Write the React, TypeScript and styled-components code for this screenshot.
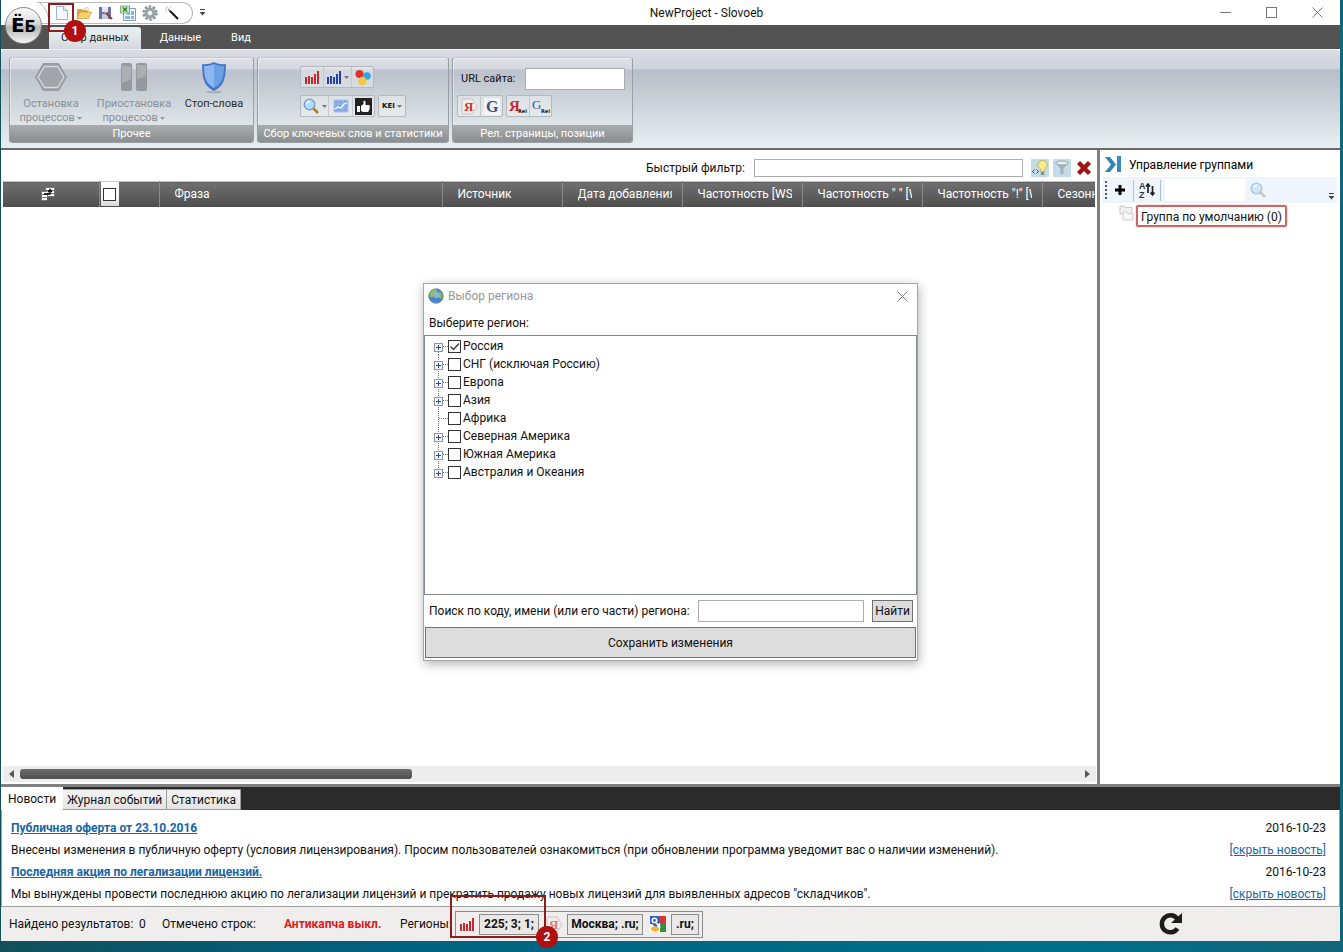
import React from 'react';
import styled, { createGlobalStyle, css } from 'styled-components';

const Global = createGlobalStyle`
  * { box-sizing: border-box; }
  body { margin: 0; font: 12px/16px Roboto, "Noto Sans", sans-serif; color: #111; }
  button, input { font: inherit; color: inherit; margin: 0; border-radius: 0; }
  button { padding: 0; }
  svg { display: block; flex: none; }
`;

const Desktop = styled.div`
  min-height: 100vh;
  display: flex;
  flex-direction: column;
  padding: 0 3px 11px 1px;
  background: linear-gradient(90deg, #12505c, #006280 30%, #00708a 80%, #12657a);
`;
const AppWindow = styled.div`
  position: relative;
  flex: 1;
  display: flex;
  flex-direction: column;
  background: #fff;
`;

/* Title bar */
const TitleBar = styled.header`
  position: relative;
  height: 25px;
  display: flex;
  align-items: center;
  padding-left: 36px;
`;
const Orb = styled.button`
  position: absolute;
  z-index: 2;
  left: 4px;
  top: 7px;
  width: 37px;
  height: 37px;
  border: 1px solid #8a8a8a;
  border-radius: 50%;
  background: linear-gradient(#fdfdfd, #d9d9d9 45%, #b5b5b5 55%, #f4f4f4);
  font: bold 20px/34px "DejaVu Sans", sans-serif;
  color: #000;
  white-space: nowrap;
  small { font-size: 15px; }
`;
const QuickBar = styled.nav`
  display: flex;
  align-items: center;
  height: 22px;
  padding: 0 9px 0 3px;
  border: 1px solid #b9b9b9;
  border-left: 0;
  border-radius: 0 11px 11px 0;
`;
const QuickButton = styled.button`
  position: relative;
  width: 22px;
  height: 20px;
  display: grid;
  place-items: center;
  border: 0;
  background: none;
`;
const More = styled.button`
  width: 18px;
  height: 20px;
  display: grid;
  place-items: center;
  border: 0;
  background: none;
`;
const Title = styled.h1`
  flex: 1;
  margin: 0;
  font-size: 12px;
  font-weight: 400;
  text-align: center;
`;
const Caption = styled.button`
  width: 46px;
  height: 24px;
  display: grid;
  place-items: center;
  border: 0;
  background: none;
`;

/* Numbered callouts */
const Callout = styled.span<{ $box: string }>`
  position: absolute;
  z-index: 3;
  inset: ${p => p.$box};
  border: 2px solid #8e1c1c;
  pointer-events: none;
`;
const CalloutNumber = styled.b`
  position: absolute;
  right: -14px;
  bottom: -12px;
  width: 22px;
  height: 22px;
  border-radius: 50%;
  background: #b01010;
  color: #fff;
  font-size: 12px;
  line-height: 22px;
  text-align: center;
`;

/* Ribbon */
const TabStrip = styled.nav`
  height: 24px;
  display: flex;
  align-items: flex-end;
  padding-left: 48px;
  background: #535353;
  font-size: 11px;
`;
const RibbonTab = styled.button<{ $active?: boolean }>`
  height: 22px;
  padding: 0 ${p => (p.$active ? 12 : 15)}px;
  margin-right: ${p => (p.$active ? 4 : 0)}px;
  border: 0;
  border-radius: 3px 3px 0 0;
  background: ${p => (p.$active ? 'linear-gradient(#dff0f3, #e4e8ea 40%, #d5d9df)' : 'none')};
  color: ${p => (p.$active ? '#222' : '#fff')};
`;
const Ribbon = styled.section`
  height: 101px;
  display: flex;
  gap: 3px;
  padding: 8px 8px 5px;
  border-bottom: 2px solid #6a6a6a;
  border-radius: 4px 4px 0 0;
  background: linear-gradient(#d9dce3, #ced2db 20%, #b8beca 21%, #c5ccd3 45%, #dfe6ea 85%, #e8eff1);
  box-shadow: inset 0 1px 0 #eef0f3;
  font-size: 11px;
`;
const Group = styled.section<{ $w: number }>`
  width: ${p => p.$w}px;
  height: 86px;
  display: flex;
  flex-direction: column;
  border: 1px solid #9a9fa3;
  border-top-color: #c3c8cc;
  border-radius: 3px;
  overflow: hidden;
  background: linear-gradient(rgba(255,255,255,.25), rgba(255,255,255,.05) 20%, rgba(255,255,255,.15));
  box-shadow: inset 1px 1px 0 rgba(255,255,255,.4);
`;
const GroupBody = styled.div`flex: 1; display: flex;`;
const ToolRows = styled.div<{ $left: number; $top: number; $gap: number }>`
  display: flex;
  flex-direction: column;
  gap: ${p => p.$gap}px;
  padding: ${p => p.$top}px 0 0 ${p => p.$left}px;
`;
const ToolRow = styled.div`display: flex; gap: 3px; height: 22px; align-items: center;`;
const GroupTitle = styled.h2`
  margin: 0;
  height: 17px;
  font-size: 11px;
  font-weight: 400;
  line-height: 17px;
  text-align: center;
  white-space: nowrap;
  color: #fff;
  background: linear-gradient(#a9adad, #8b8e8e);
`;
const BigButton = styled.button<{ $w: number }>`
  width: ${p => p.$w}px;
  display: flex;
  flex-direction: column;
  align-items: center;
  gap: 3px;
  padding-top: 4px;
  border: 0;
  background: none;
  line-height: 14px;
  color: #2b2b2b;
  &:disabled { color: #8b9095; }
`;
const ToolSet = styled.div`
  display: flex;
  height: 22px;
  border: 1px solid #b3b9bd;
  border-radius: 2px;
  background: rgba(255,255,255,.35);
`;
const Tool = styled.button<{ $w?: number }>`
  width: ${p => p.$w ?? 22}px;
  display: flex;
  align-items: center;
  justify-content: center;
  gap: 2px;
  border: 0;
  background: none;
  & + & { border-left: 1px solid #c3c9cd; }
`;
const KeiText = styled.span`font: bold 7px/10px "DejaVu Sans", sans-serif;`;
const UrlLabel = styled.label`display: flex; align-items: center; gap: 9px; padding-left: 4px; white-space: nowrap;`;
const TextBox = styled.input<{ $w?: number; $h: number }>`
  ${p => (p.$w ? css`width: ${p.$w}px;` : css`flex: 1; min-width: 0;`)}
  height: ${p => p.$h}px;
  padding: 0 4px;
  border: 1px solid #abadb3;
  background: #fff;
`;

/* Work area */
const Work = styled.main`flex: 1; display: flex; border-bottom: 3px solid #808080;`;
const DataPane = styled.section`
  flex: 1;
  min-width: 0;
  display: flex;
  flex-direction: column;
  padding-left: 2px;
`;
const FilterBar = styled.div`
  height: 31px;
  display: flex;
  align-items: center;
  justify-content: flex-end;
  gap: 4px;
  padding: 4px 4px 0 0;
`;
const FilterLabel = styled.label`display: flex; align-items: center; gap: 9px; margin-right: 4px;`;
const FilterButton = styled.button<{ $plain?: boolean }>`
  width: 18px;
  height: 18px;
  display: grid;
  place-items: center;
  border: 0;
  background: ${p => (p.$plain ? 'none' : '#c2dcea')};
`;
const TableWrap = styled.div`flex: 1; overflow: hidden; margin-right: 2px;`;
const Table = styled.table`
  width: 1160px;
  table-layout: fixed;
  border-collapse: collapse;
`;
const HeadCell = styled.th<{ $w: number }>`
  width: ${p => p.$w}px;
  height: 25px;
  padding: 0 10px 0 15px;
  border-right: 1px solid #8a8a8a;
  border-top: 1px solid #c8c8c8;
  background: linear-gradient(#707070, #4d4d4d);
  color: #fff;
  font-weight: 400;
  text-align: left;
  white-space: nowrap;
  overflow: hidden;
`;
const HeadClip = styled.div`overflow: hidden;`;
const IconCell = styled(HeadCell)`padding: 0 0 0 38px;`;
const CheckCell = styled(HeadCell)`padding: 0;`;
const CheckHolder = styled.label`
  width: 18px;
  height: 24px;
  display: grid;
  place-items: center;
  margin-left: 1px;
  background: linear-gradient(#fff, #f4f2ee 70%, #d9d5cc);
`;
const Check = styled.input`
  appearance: none;
  width: 13px;
  height: 13px;
  border: 1px solid #333;
  background: #fff;
`;
const ScrollBar = styled.div`
  height: 16px;
  display: flex;
  align-items: center;
  gap: 6px;
  padding: 0 6px;
  margin: 0 1px 2px 0;
  background: #ededed;
`;
const ScrollTrack = styled.div`flex: 1;`;
const ScrollThumb = styled.div`
  width: 37%;
  height: 10px;
  border-radius: 3px;
  background: linear-gradient(#6d6d6d, #4e4e4e);
`;
const SidePane = styled.aside`width: 243px; border-left: 3px solid #808080; padding: 0 3px 0 2px;`;
const SideHead = styled.div`
  height: 27px;
  display: flex;
  align-items: center;
  gap: 7px;
  padding: 2px 0 0 3px;
`;
const SideTitle = styled.h2`margin: 0; font-size: 12px; font-weight: 400; color: #000;`;
const SideTools = styled.div`
  height: 26px;
  display: flex;
  align-items: center;
  gap: 4px;
  padding-left: 3px;
  background: #eff5fc;
`;
const Dots = styled.span`width: 2px; height: 18px; border-left: 2px dotted #555;`;
const Bar = styled.span`width: 1px; height: 21px; background: #b7c0cc;`;
const SideButton = styled.button<{ $w: number }>`
  width: ${p => p.$w}px;
  height: 22px;
  display: grid;
  place-items: center;
  border: 0;
  background: none;
`;
const SideSearch = styled.input`width: 80px; height: 22px; border: 0; background: #fff;`;
const SideMore = styled(SideButton)`margin-left: auto; align-self: flex-end; height: 14px;`;
const GroupNode = styled.div`display: flex; gap: 2px; padding: 2px 0 0 17px;`;
const GroupName = styled.span`
  height: 22px;
  padding: 0 3px;
  border: 2px solid #cc6666;
  border-radius: 2px;
  box-shadow: 0 0 2px #e9a9a9;
  line-height: 20px;
  white-space: nowrap;
`;

/* News */
const NewsTabs = styled.nav`
  height: 23px;
  display: flex;
  align-items: flex-end;
  background: #2b2b2b;
`;
const NewsTab = styled.button<{ $active?: boolean }>`
  height: ${p => (p.$active ? 23 : 21)}px;
  padding: 0 ${p => (p.$active ? 7 : 4)}px;
  border: solid #9a9a9a;
  border-width: ${p => (p.$active ? 0 : '1px 1px 1px 0')};
  background: ${p => (p.$active ? '#fff' : 'linear-gradient(#f3f3f3, #e4e4e4)')};
`;
const News = styled.section`
  display: grid;
  grid-template-columns: 1fr auto;
  grid-auto-rows: 22px;
  align-items: center;
  padding: 7px 13px 1px 9px;
  border: solid #a0a0a0;
  border-width: 0 1px 1px;
`;
const NewsLink = styled.a<{ $bold?: boolean }>`
  justify-self: start;
  color: #1766a6;
  font-weight: ${p => (p.$bold ? 700 : 400)};
`;
const NewsText = styled.span`white-space: nowrap;`;
const NewsDate = styled.time`text-align: right;`;

/* Status bar */
const StatusBar = styled.footer`
  height: 34px;
  display: flex;
  align-items: center;
  padding-left: 8px;
  background: #f0eeed;
  white-space: nowrap;
`;
const Stat = styled.span<{ $w: number }>`width: ${p => p.$w}px; flex: none;`;
const Warning = styled.b`width: 116px; color: #e01b1b;`;
const Regions = styled.div`
  display: flex;
  gap: 7px;
  height: 27px;
  margin-left: 5px;
  padding: 0 3px;
  align-items: center;
  border: 1px solid #8c8c8c;
`;
const Region = styled.div`position: relative; display: flex; align-items: center; gap: 4px;`;
const RegionButton = styled.button<{ $w: number }>`
  width: ${p => p.$w}px;
  height: 21px;
  border: 1px solid #8c8c8c;
  background: #eae8e7;
  font-weight: 700;
`;
const Refresh = styled.button`
  display: grid;
  place-items: center;
  width: 28px;
  height: 28px;
  margin: 0 155px 0 auto;
  border: 0;
  background: none;
`;

/* Region dialog */
const Overlay = styled.div`
  position: absolute;
  inset: 0;
  display: grid;
  place-items: center;
  padding-top: 3px;
  pointer-events: none;
`;
const Dialog = styled.div`
  width: 495px;
  pointer-events: auto;
  border: 1px solid #a6a6a6;
  background: #fff;
  box-shadow: 1px 3px 10px rgba(0,0,0,.3);
`;
const DialogHead = styled.div`
  height: 24px;
  display: flex;
  align-items: center;
  gap: 4px;
  padding-left: 4px;
  color: #999;
`;
const DialogTitle = styled.h2`margin: 0; flex: 1; font-size: 12px; font-weight: 400;`;
const DialogClose = styled.button`width: 30px; height: 24px; display: grid; place-items: center; border: 0; background: none;`;
const DialogHint = styled.p`margin: 0; height: 27px; padding: 7px 5px 0;`;
const Tree = styled.ul`
  margin: 0;
  height: 260px;
  padding: 1px 9px;
  border: 1px solid #828790;
  list-style: none;
`;
const TreeItem = styled.li`height: 18px; display: flex; align-items: center;`;
const TreeLabel = styled.label`display: flex; align-items: center; gap: 2px; white-space: nowrap;`;
const CheckBox = styled.span`
  position: relative;
  display: block;
  width: 13px;
  height: 13px;
  svg { position: absolute; inset: 0; pointer-events: none; }
  input { display: block; }
`;
const SearchRow = styled.div`
  height: 31px;
  display: flex;
  align-items: center;
  gap: 8px;
  padding: 0 4px 0 5px;
  white-space: nowrap;
`;
const PlainButton = styled.button<{ $w?: number; $h: number }>`
  width: ${p => (p.$w ? `${p.$w}px` : 'auto')};
  height: ${p => p.$h}px;
  border: 1px solid #707070;
  background: #ddd;
`;
const SaveRow = styled.div`display: grid; padding: 1px 1px 2px;`;

/* Icons */
const ArrowSvg = styled.svg`display: inline-block; vertical-align: middle;`;
const Arrow = ({ color = '#777' }: { color?: string }) => (
  <ArrowSvg width="5" height="3" viewBox="0 0 5 3"><path d="M0 0h5L2.500 3z" fill={color} /></ArrowSvg>
);
const BarCurve = () => (
  <svg width="11" height="20" viewBox="0 0 11 20"><path d="M0 0Q8 6 9.500 20" fill="none" stroke="#b9b9b9" /></svg>
);
const MoreIcon = () => (
  <svg width="7" height="7" viewBox="0 0 7 7"><path d="M1 0h5v1H1zM0.500 3h6L3.500 6.500z" fill="#444" /></svg>
);
const PageIcon = () => (
  <svg width="14" height="16" viewBox="0 0 14 16"><path d="M1.500 1.500h7l4 4v9h-11z" fill="#f5f9fd" stroke="#9fb4cc" /><path d="M8.500 1.500v4h4" fill="#dce8f4" stroke="#9fb4cc" /></svg>
);
const FolderIcon = () => (
  <svg width="16" height="14" viewBox="0 0 16 14"><path d="M1 12V4l1-1h4l1 1h5v3" fill="#d9a93c" /><path d="M7 3l5-2 1 4" fill="#f5efd8" stroke="#b9b29a" strokeWidth=".5" /><path d="M1 12.500L4 6h11.500l-3 6.500z" fill="#f5cf6d" stroke="#cf9a33" strokeWidth=".7" /></svg>
);
const SaveIcon = () => (
  <svg width="16" height="16" viewBox="0 0 16 16"><path d="M1 2h12v12H1z" fill="#6a6fa8" /><path d="M4 2h6v5H4z" fill="#e6e8f5" /><path d="M4 9h6v5H4z" fill="#c6c9e2" /><path d="M7 7l7 7" stroke="#7a4a3c" strokeWidth="2" /><path d="M6 5l2 3" stroke="#ddd" strokeWidth="1.500" /></svg>
);
const ExcelIcon = () => (
  <svg width="17" height="16" viewBox="0 0 17 16"><path d="M4.500 3.500h11v12h-12v-10" fill="#eef4fb" stroke="#7f9fc6" /><path d="M7 8h3v2H7zM11 6h3v4h-3zM11 11h3v3h-3zM5 11h5v3H5z" fill="#8fb3dc" /><path d="M.5 1h9v7h-9z" fill="#cfe6c8" stroke="#62a05a" strokeWidth=".8" /><path d="M3 2.500l4 4M7 2.500l-4 4" stroke="#2f7d32" strokeWidth="1.500" /></svg>
);
const GearIcon = () => (
  <svg width="16" height="16" viewBox="0 0 16 16"><circle cx="8" cy="8" r="6.400" fill="none" stroke="#8a949b" strokeWidth="2.500" strokeDasharray="2.500 1.520" /><circle cx="8" cy="8" r="4" fill="#cfd5d9" stroke="#9aa3a9" strokeWidth="3" /><circle cx="8" cy="8" r="1.800" fill="#fff" /></svg>
);
const WandIcon = () => (
  <svg width="16" height="16" viewBox="0 0 16 16"><path d="M5 5l9 9" stroke="#111" strokeWidth="2" /><path d="M4 4l2 2" stroke="#aaa" strokeWidth="2" /><path d="M3 1v2M1 4h2M7 2l-1 1M2 7l1-1" stroke="#c0c0c0" /></svg>
);
const MinIcon = () => <svg width="11" height="11"><path d="M0 5.500h11" stroke="#777" /></svg>;
const MaxIcon = () => <svg width="11" height="11"><rect x=".5" y=".5" width="10" height="10" fill="none" stroke="#777" /></svg>;
const CloseIcon = () => (
  <svg width="11" height="11"><path d="M.5.5l10 10M10.500.5l-10 10" stroke="#777" /></svg>
);
const StopIcon = () => (
  <svg width="32" height="32" viewBox="0 0 32 32"><path d="M8 1h16l8 14-8 14H8L0 15z" fill="#9a9da1" /><path d="M9.500 4.500h13L29 15l-6.500 10.500h-13L3 15z" fill="#a1a4a8" stroke="#d8dbde" strokeWidth="1.300" /></svg>
);
const PauseIcon = () => (
  <svg width="26" height="32" viewBox="0 0 26 32"><rect x="0" y="1" width="11" height="28" rx="2" fill="#96999d" /><rect x="15" y="1" width="11" height="28" rx="2" fill="#96999d" /><path d="M1 21l9-4V5l-9-2z" fill="#aeb1b4" /><path d="M16 17l9-3V3h-9z" fill="#abaeb1" /></svg>
);
const ShieldIcon = () => (
  <svg width="28" height="32" viewBox="0 0 28 32"><ellipse cx="14" cy="30" rx="8" ry="1.500" fill="#8a93a0" opacity=".5" /><path d="M14 0c4 2 8 2.500 12 2-.5 14-1 21-12 27C3 23 2.500 16 2 2c4 .5 8 0 12-2z" fill="#4576c4" /><path d="M14 2c3 1.500 7 2 10 2-.4 11-1 17-10 22z" fill="#6b9fe6" /><path d="M14 2C11 3.500 7 4 4 4c.4 11 1 17 10 22z" fill="#8bb8f2" /></svg>
);
const BarsIcon = ({ color }: { color: string }) => (
  <svg width="16" height="16" viewBox="0 0 16 16"><path d="M1 8h2v7H1zM4 7h2v8H4zM7 8h2v7H7zM10 5h2v10h-2zM13 2h2v13h-2z" fill={color} /></svg>
);
const BallsIcon = () => (
  <svg width="18" height="17" viewBox="0 0 18 17"><circle cx="13" cy="7" r="3.700" fill="#2ea3dc" /><circle cx="5.500" cy="5" r="4" fill="#d8342c" /><circle cx="8.500" cy="12" r="4.200" fill="#f5c542" /></svg>
);
const LensIcon = ({ faded = false }: { faded?: boolean }) => (
  <svg width="17" height="16" viewBox="0 0 17 16" opacity={faded ? 0.55 : 1}><path d="M10 10l5 5" stroke={faded ? '#c8a070' : '#b07a2c'} strokeWidth="2.500" /><circle cx="6.500" cy="6.500" r="5.300" fill="#b4dbf6" stroke="#6f9fcc" strokeWidth="1.300" /><path d="M3.500 5.500a3.500 3.500 0 0 1 3.500-2" stroke="#fff" fill="none" strokeWidth="1.500" /></svg>
);
const ChartIcon = () => (
  <svg width="16" height="14" viewBox="0 0 16 14"><path d="M1 1h14v12H1z" fill="#7fa8e4" stroke="#a9c4ee" /><path d="M1 5h14M1 9h14M5 1v12M10 1v12" stroke="#a5c2ee" strokeWidth=".6" /><path d="M2 10l3-2 3 1 3-4 3-1" stroke="#fff" fill="none" strokeWidth="1.300" /></svg>
);
const ThumbIcon = () => (
  <svg width="17" height="17" viewBox="0 0 17 17"><path d="M0 0h17v17H0z" fill="#222" /><path d="M2 8h3v6H2zM6 8l2.500-2V3q1.500-.8 2 .7V7H14q1.500.8.6 2 .6 1-.3 2 .4 1.200-.6 1.800 0 1.200-1.200 1.200H8l-2-1z" fill="#fff" /></svg>
);
const YandexIcon = ({ color = '#d8322a' }: { color?: string }) => (
  <svg width="17" height="17" viewBox="0 0 17 17"><path d="M2 1h9l5 7.500-5 7.500H2q-1 0-1-1V2q0-1 1-1z" fill="#f1eded" stroke="#bdbaba" strokeWidth=".8" /><text x="3" y="13" fontFamily="Liberation Serif" fontWeight="700" fontSize="13" fill={color}>Я</text></svg>
);
const GIcon = () => (
  <svg width="16" height="17" viewBox="0 0 16 17"><path d="M0 0h16v17H0z" fill="#f3f4f6" /><text x="2" y="14" fontFamily="Liberation Serif" fontWeight="700" fontSize="16" fill="#34508a">G</text></svg>
);
const RelIcon = ({ letter, color, size }: { letter: string; color: string; size: number }) => (
  <svg width="20" height="18" viewBox="0 0 20 18"><text x="1" y={size - 1} fontFamily="Liberation Serif" fontWeight={size > 14 ? 700 : 400} fontSize={size} fill={color}>{letter}</text><text x="10" y="16" fontFamily="DejaVu Sans" fontWeight="700" fontSize="5" fill="#222">Rel</text></svg>
);
const BulbIcon = () => (
  <svg width="18" height="18" viewBox="0 0 18 18"><path d="M11.500 1.500a4.300 4.300 0 0 1 2.500 8l-.8 3h-3.400l-.8-3a4.300 4.300 0 0 1 2.500-8z" fill="#f7ec8c" stroke="#b8a848" strokeWidth=".8" /><path d="M9.800 13h3.500v3H9.800z" fill="#8a8f98" /><path d="M3.500 10.500l-2 2 2 2M5.500 10.500l2 2-2 2" stroke="#284a78" fill="none" /></svg>
);
const FunnelIcon = () => (
  <svg width="16" height="16" viewBox="0 0 16 16"><path d="M1.500 3l5 5.500V15l3-1.500v-5L14.500 3z" fill="#a9b0b5" /><ellipse cx="8" cy="3" rx="6.500" ry="2" fill="#e8ecef" stroke="#8e979d" strokeWidth=".8" /></svg>
);
const CrossIcon = () => (
  <svg width="16" height="16" viewBox="0 0 16 16"><path d="M2.500 2.500l11 11M13.500 2.500l-11 11" stroke="#a01616" strokeWidth="4.500" /></svg>
);
const CopyRowsIcon = () => (
  <svg width="15" height="14" viewBox="0 0 15 14"><path d="M4 0h10v10H4z" fill="#777" /><path d="M5 1h8v2H5zM5 4h8v2H5zM7 7h6v2H7z" fill="#fff" /><path d="M0 4h6v10H0z" fill="#777" /><path d="M1 5h5v2H1zM1 8h5v2H1zM1 11h5v2H1z" fill="#fff" /><path d="M3 7h6V3M7 5l2-2.500L11 5" stroke="#000" strokeWidth="1.300" fill="none" /></svg>
);
const CollapseIcon = () => (
  <svg width="17" height="17" viewBox="0 0 17 17"><path d="M0 1h5l6 7.500L5 16H0l6-7.500z" fill="#2f86b4" /><path d="M12 0h4v16h-4V9l-1-.5 1-.5z" fill="#3a8cb8" /></svg>
);
const PlusIcon = () => <svg width="12" height="12"><path d="M4.500 1h3v3.500H11v3H7.500V11h-3V7.500H1v-3h3.500z" fill="#000" /></svg>;
const SortIcon = () => (
  <svg width="17" height="18" viewBox="0 0 17 18"><text x="0" y="8" fontFamily="Liberation Sans" fontWeight="700" fontSize="9" fill="#333">A</text><text x="0" y="17" fontFamily="Liberation Sans" fontWeight="700" fontSize="9" fill="#333">Z</text><path d="M9 12V3M7 5.500L9 3l2 2.500M13.500 5v9M11.500 11.500l2 2.500 2-2.500" stroke="#222" strokeWidth="1.700" fill="none" /></svg>
);
const FoldersIcon = () => (
  <svg width="15" height="16" viewBox="0 0 15 16"><path d="M1 1h4l1 1.500h7V9H1z" fill="#f1f1f1" stroke="#c9c9c9" /><path d="M4 7h4l1 1.500h5V15H4z" fill="#f6f6f6" stroke="#d0d0d0" /></svg>
);
const GlobeIcon = () => (
  <svg width="16" height="16" viewBox="0 0 16 16"><circle cx="8" cy="8" r="7.300" fill="#4d82cc" stroke="#6486a8" strokeWidth=".8" /><path d="M2 5q2-4 6-4l1 3-3 2-1 3-3 0z" fill="#8fc160" /><path d="M11 3q4 2 4 6l-3 2-2-3z" fill="#7fb455" /><circle cx="8.500" cy="7" r="3" fill="#9cc8f2" opacity=".7" /></svg>
);
const GoogleIcon = () => (
  <svg width="17" height="17" viewBox="0 0 17 17"><path d="M8 0h8v7H8z" fill="#d8352c" /><path d="M10 7h6v9h-6z" fill="#2f8f46" /><path d="M0 0h9v8H0z" fill="#2f62c4" /><path d="M0 8h10v8H0z" fill="#fff" /><circle cx="4.500" cy="4.500" r="3" fill="#fff" /><circle cx="4.500" cy="4.500" r="1.400" fill="#2f62c4" /><path d="M6 8q5 1 3 5" stroke="#fff" strokeWidth="2" fill="none" /><ellipse cx="5" cy="13" rx="4" ry="2.800" fill="#f0b72f" /><path d="M3 8l4 2" stroke="#2f62c4" strokeWidth="2" /></svg>
);
const RefreshIcon = () => (
  <svg width="24" height="24" viewBox="0 0 24 24"><path d="M18.500 16.500A8.500 8.500 0 1 1 18 6.500" fill="none" stroke="#1c1c1c" strokeWidth="4.500" /><path d="M23 1v10H12z" fill="#1c1c1c" /></svg>
);
const TickIcon = () => <svg width="13" height="13"><path d="M2.500 6.500l3 3 5.500-6" fill="none" stroke="#333" strokeWidth="1.300" /></svg>;

const Branch = ({ plus, first, last }: { plus: boolean; first: boolean; last: boolean }) => (
  <svg width="14" height="18" viewBox="0 0 14 18">
    <path d={`M4.500 ${first ? 9 : 0}V${last ? 9 : 18}`} stroke="#777" strokeDasharray="1 1" />
    <path d="M5 9.500h9" stroke="#777" strokeDasharray="1 1" />
    {plus && <><rect x=".5" y="6.500" width="8" height="8" fill="#f4f6fa" stroke="#8d96a3" /><path d="M2 10.500h5M4.500 8v5" stroke="#2c4a86" /></>}
  </svg>
);

const quick: [string, React.ReactNode][] = [
  ['Новый проект', <PageIcon />], ['Открыть', <FolderIcon />], ['Сохранить', <SaveIcon />],
  ['Экспорт', <ExcelIcon />], ['Настройки', <GearIcon />], ['Мастер', <WandIcon />],
];
const columns: [string, number][] = [
  ['Фраза', 283], ['Источник', 120], ['Дата добавления', 120], ['Частотность [WS]', 120],
  ['Частотность " " [WS]', 120], ['Частотность "!" [WS]', 120], ['Сезонность', 121],
];
const regions: [string, boolean][] = [
  ['Россия', true], ['СНГ (исключая Россию)', true], ['Европа', true], ['Азия', true],
  ['Африка', false], ['Северная Америка', true], ['Южная Америка', true], ['Австралия и Океания', true],
];
const news = [
  ['Публичная оферта от 23.10.2016', 'Внесены изменения в публичную оферту (условия лицензирования). Просим пользователей ознакомиться (при обновлении программа уведомит вас о наличии изменений).'],
  ['Последняя акция по легализации лицензий.', 'Мы вынуждены провести последнюю акцию по легализации лицензий и прекратить продажу новых лицензий для выявленных адресов "складчиков".'],
];

export default function App() {
  return (
    <Desktop>
      <Global />
      <AppWindow>
        <TitleBar>
          <Orb>Ё<small>Б</small></Orb>
          <QuickBar>
            <BarCurve />
            {quick.map(([name, icon], i) => (
              <QuickButton key={name} aria-label={name}>
                {icon}
                {i === 0 && <Callout $box="0 -1px -9px -3px"><CalloutNumber>1</CalloutNumber></Callout>}
              </QuickButton>
            ))}
          </QuickBar>
          <More aria-label="Ещё"><MoreIcon /></More>
          <Title>NewProject - Slovoeb</Title>
          <Caption aria-label="Свернуть"><MinIcon /></Caption>
          <Caption aria-label="Развернуть"><MaxIcon /></Caption>
          <Caption aria-label="Закрыть"><CloseIcon /></Caption>
        </TitleBar>

        <TabStrip>
          <RibbonTab $active>Сбор данных</RibbonTab>
          <RibbonTab>Данные</RibbonTab>
          <RibbonTab>Вид</RibbonTab>
        </TabStrip>
        <Ribbon>
          <Group $w={245}>
            <GroupBody>
              <BigButton $w={82} disabled><StopIcon /><span>Остановка<br />процессов <Arrow color="#999" /></span></BigButton>
              <BigButton $w={84} disabled><PauseIcon /><span>Приостановка<br />процессов <Arrow color="#999" /></span></BigButton>
              <BigButton $w={76}><ShieldIcon /><span>Стоп-слова</span></BigButton>
            </GroupBody>
            <GroupTitle>Прочее</GroupTitle>
          </Group>
          <Group $w={192}>
            <GroupBody>
              <ToolRows $left={42} $top={8} $gap={7}>
                <ToolRow>
                  <ToolSet>
                    <Tool aria-label="Wordstat"><BarsIcon color="#c8282c" /></Tool>
                    <Tool $w={28} aria-label="Директ"><BarsIcon color="#2440b0" /><Arrow /></Tool>
                    <Tool aria-label="Метрика"><BallsIcon /></Tool>
                  </ToolSet>
                </ToolRow>
                <ToolRow>
                  <ToolSet>
                    <Tool $w={27} aria-label="Поиск"><LensIcon /><Arrow /></Tool>
                    <Tool $w={24} aria-label="График"><ChartIcon /></Tool>
                    <Tool aria-label="Лучшее"><ThumbIcon /></Tool>
                  </ToolSet>
                  <ToolSet><Tool $w={26}><KeiText>KEI</KeiText><Arrow /></Tool></ToolSet>
                </ToolRow>
              </ToolRows>
            </GroupBody>
            <GroupTitle>Сбор ключевых слов и статистики</GroupTitle>
          </Group>
          <Group $w={181}>
            <GroupBody>
              <ToolRows $left={4} $top={10} $gap={5}>
                <ToolRow>
                  <UrlLabel>URL сайта:<TextBox $w={100} $h={22} /></UrlLabel>
                </ToolRow>
                <ToolRow>
                  <ToolSet>
                    <Tool aria-label="Яндекс"><YandexIcon /></Tool>
                    <Tool aria-label="Google"><GIcon /></Tool>
                  </ToolSet>
                  <ToolSet>
                    <Tool><RelIcon letter="Я" color="#c8282c" size={15} /></Tool>
                    <Tool><RelIcon letter="G" color="#2f55b4" size={13} /></Tool>
                  </ToolSet>
                </ToolRow>
              </ToolRows>
            </GroupBody>
            <GroupTitle>Рел. страницы, позиции</GroupTitle>
          </Group>
        </Ribbon>

        <Work>
          <DataPane>
            <FilterBar>
              <FilterLabel>Быстрый фильтр:<TextBox $w={269} $h={18} /></FilterLabel>
              <FilterButton aria-label="Подсказка"><BulbIcon /></FilterButton>
              <FilterButton aria-label="Фильтр"><FunnelIcon /></FilterButton>
              <FilterButton $plain aria-label="Сбросить"><CrossIcon /></FilterButton>
            </FilterBar>
            <TableWrap>
              <Table>
                <thead>
                  <tr>
                    <IconCell $w={96}><CopyRowsIcon /></IconCell>
                    <CheckCell $w={60}><CheckHolder><Check type="checkbox" aria-label="Отметить все" /></CheckHolder></CheckCell>
                    {columns.map(([name, w]) => <HeadCell key={name} $w={w}><HeadClip>{name}</HeadClip></HeadCell>)}
                  </tr>
                </thead>
              </Table>
            </TableWrap>
            <ScrollBar>
              <svg width="5" height="8"><path d="M5 0v8L0 4z" fill="#555" /></svg>
              <ScrollTrack><ScrollThumb /></ScrollTrack>
              <svg width="5" height="8"><path d="M0 0v8l5-4z" fill="#555" /></svg>
            </ScrollBar>
          </DataPane>
          <SidePane>
            <SideHead><CollapseIcon /><SideTitle>Управление группами</SideTitle></SideHead>
            <SideTools>
              <Dots />
              <SideButton $w={18} aria-label="Добавить"><PlusIcon /></SideButton>
              <Bar />
              <SideButton $w={18} aria-label="Сортировать"><SortIcon /></SideButton>
              <Bar />
              <SideSearch aria-label="Поиск группы" />
              <SideButton $w={18} aria-label="Найти группу"><LensIcon faded /></SideButton>
              <SideMore $w={12} aria-label="Ещё"><MoreIcon /></SideMore>
            </SideTools>
            <GroupNode><FoldersIcon /><GroupName>Группа по умолчанию (0)</GroupName></GroupNode>
          </SidePane>
        </Work>

        <NewsTabs>
          <NewsTab $active>Новости</NewsTab>
          <NewsTab>Журнал событий</NewsTab>
          <NewsTab>Статистика</NewsTab>
        </NewsTabs>
        <News>
          {news.map(([title, text]) => (
            <React.Fragment key={title}>
              <NewsLink $bold href="#">{title}</NewsLink>
              <NewsDate>2016-10-23</NewsDate>
              <NewsText>{text}</NewsText>
              <NewsLink href="#">[скрыть новость]</NewsLink>
            </React.Fragment>
          ))}
        </News>
        <StatusBar>
          <Stat $w={130}>Найдено результатов:</Stat>
          <Stat $w={23}>0</Stat>
          <Stat $w={122}>Отмечено строк:</Stat>
          <Warning>Антикапча выкл.</Warning>
          <Stat $w={50}>Регионы:</Stat>
          <Regions>
            <Region>
              <BarsIcon color="#c8282c" /><RegionButton $w={60}>225; 3; 1;</RegionButton>
              <Callout $box="-19px -7px -3px -9px"><CalloutNumber>2</CalloutNumber></Callout>
            </Region>
            <Region><YandexIcon color="#e07a74" /><RegionButton $w={76}>Москва; .ru;</RegionButton></Region>
            <Region><GoogleIcon /><RegionButton $w={28}>.ru;</RegionButton></Region>
          </Regions>
          <Refresh aria-label="Обновить"><RefreshIcon /></Refresh>
        </StatusBar>

        <Overlay>
          <Dialog role="dialog" aria-label="Выбор региона">
            <DialogHead>
              <GlobeIcon />
              <DialogTitle>Выбор региона</DialogTitle>
              <DialogClose aria-label="Закрыть окно"><CloseIcon /></DialogClose>
            </DialogHead>
            <DialogHint>Выберите регион:</DialogHint>
            <Tree>
              {regions.map(([name, plus], i) => (
                <TreeItem key={name}>
                  <Branch plus={plus} first={i === 0} last={i === regions.length - 1} />
                  <TreeLabel>
                    <CheckBox><Check type="checkbox" defaultChecked={i === 0} />{i === 0 && <TickIcon />}</CheckBox>
                    {name}
                  </TreeLabel>
                </TreeItem>
              ))}
            </Tree>
            <SearchRow>
              <label htmlFor="region-search">Поиск по коду, имени (или его части) региона:</label>
              <TextBox id="region-search" $h={22} />
              <PlainButton $w={41} $h={22}>Найти</PlainButton>
            </SearchRow>
            <SaveRow><PlainButton $h={31}>Сохранить изменения</PlainButton></SaveRow>
          </Dialog>
        </Overlay>
      </AppWindow>
    </Desktop>
  );
}
